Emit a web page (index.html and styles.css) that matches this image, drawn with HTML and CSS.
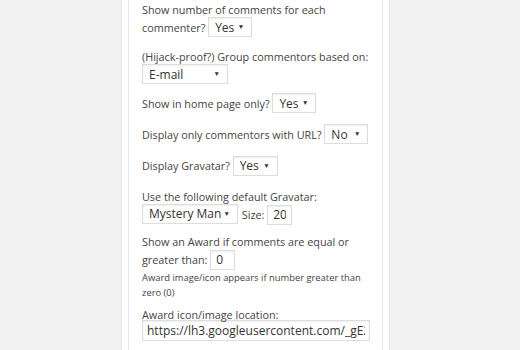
FILE: index.html
```html
<!DOCTYPE html>
<html lang="en">
  <head>
    <meta charset="UTF-8" />
    <title>Top Commentators Widget</title>
    <link rel="stylesheet" href="styles.css">
  </head>
  <body>
    <div class="widget">
      <div class="widget-inside">
        <p>Show number of comments for each commenter?
          <span class="select w-44"><select><option>Yes</option></select></span>
        </p>

        <p class="group">(Hijack-proof?) Group commentors based on:<br>
          <span class="select w-86"><select><option>E-mail</option></select></span>
        </p>

        <p class="row first-row">Show in home page only?
          <span class="select w-44"><select><option>Yes</option></select></span>
        </p>

        <p class="row">Display only commentors with URL?
          <span class="select w-44"><select><option>No</option></select></span>
        </p>

        <p class="row">Display Gravatar?
          <span class="select w-45"><select><option>Yes</option></select></span>
        </p>

        <p class="gravatar">Use the following default Gravatar:<br>
          <span class="select w-96"><select><option>Mystery Man</option></select></span>
          <label class="size">Size: <input type="text" class="input small-input" value="20" /></label>
        </p>

        <p class="award">Show an Award if comments are equal or greater than:
          <input type="text" class="input small-input" value="0" /><br>
          <small>Award image/icon appears if number greater than zero (0)</small>
        </p>

        <p>Award icon/image location:
          <input type="text" class="input url-input" value="https://lh3.googleusercontent.com/_gE2Zj1-mJ0Q" />
        </p>
      </div>
    </div>
  </body>
</html>
```

FILE: styles.css
```css
* {
  box-sizing: border-box;
}

body {
  margin: 0;
  background-color: #f1f1f1;
  font-family: 'Open Sans', sans-serif;
  font-size: 10.8px;
  color: #444;
}

.widget {
  margin-left: 121px;
  width: 269px;
  height: 350px;
  overflow: hidden;
  padding: 0 6px;
  background-color: #fff;
  border-left: 1px solid #e5e5e5;
  border-right: 1px solid #e5e5e5;
}

.widget-inside {
  height: 350px;
  padding: 1px 8px 0 13px;
  border-left: 1px solid #e5e5e5;
  border-right: 1px solid #e5e5e5;
}

p {
  margin: 0 0 10px;
  line-height: 18px;
}

.group {
  margin-bottom: 9px;
}

.row {
  line-height: 20px;
  margin: 11px 0;
}

.first-row {
  margin-top: 9px;
}

.gravatar {
  margin-bottom: 8px;
}

.award {
  margin-bottom: 5px;
}

.select {
  position: relative;
  display: inline-block;
  vertical-align: middle;
  margin: -3px 0 1px;
}

.select::after {
  content: "\25BC";
  position: absolute;
  right: 8px;
  top: 6px;
  font-size: 6.5px;
  line-height: 8px;
  color: #333;
  pointer-events: none;
}

select {
  appearance: none;
  -webkit-appearance: none;
  display: block;
  width: 100%;
  height: 20px;
  margin: 0;
  padding: 0 6px;
  font-family: 'Open Sans', sans-serif;
  font-size: 12px;
  color: #333;
  background-color: #fff;
  border: 1px solid #ddd;
  border-radius: 0;
  box-shadow: inset 0 1px 2px rgba(0, 0, 0, 0.07);
  outline: none;
}

.w-44 {
  width: 44px;
}

.w-45 {
  width: 45px;
}

.w-86 {
  width: 86px;
}

.w-96 {
  width: 96px;
}

.input {
  height: 20px;
  margin: -2px 0 0;
  padding: 0 5px;
  font-family: 'Open Sans', sans-serif;
  font-size: 12px;
  color: #333;
  background-color: #fff;
  border: 1px solid #ddd;
  box-shadow: inset 0 1px 2px rgba(0, 0, 0, 0.07);
  vertical-align: middle;
  outline: none;
}

.small-input {
  width: 25px;
}

.size {
  margin-left: 1px;
}

.url-input {
  display: block;
  width: 228px;
  height: 21px;
  margin: -4px 0 0;
  padding: 0 4px;
}

small {
  display: inline-block;
  font-size: 9.4px;
  line-height: 15px;
}
```
